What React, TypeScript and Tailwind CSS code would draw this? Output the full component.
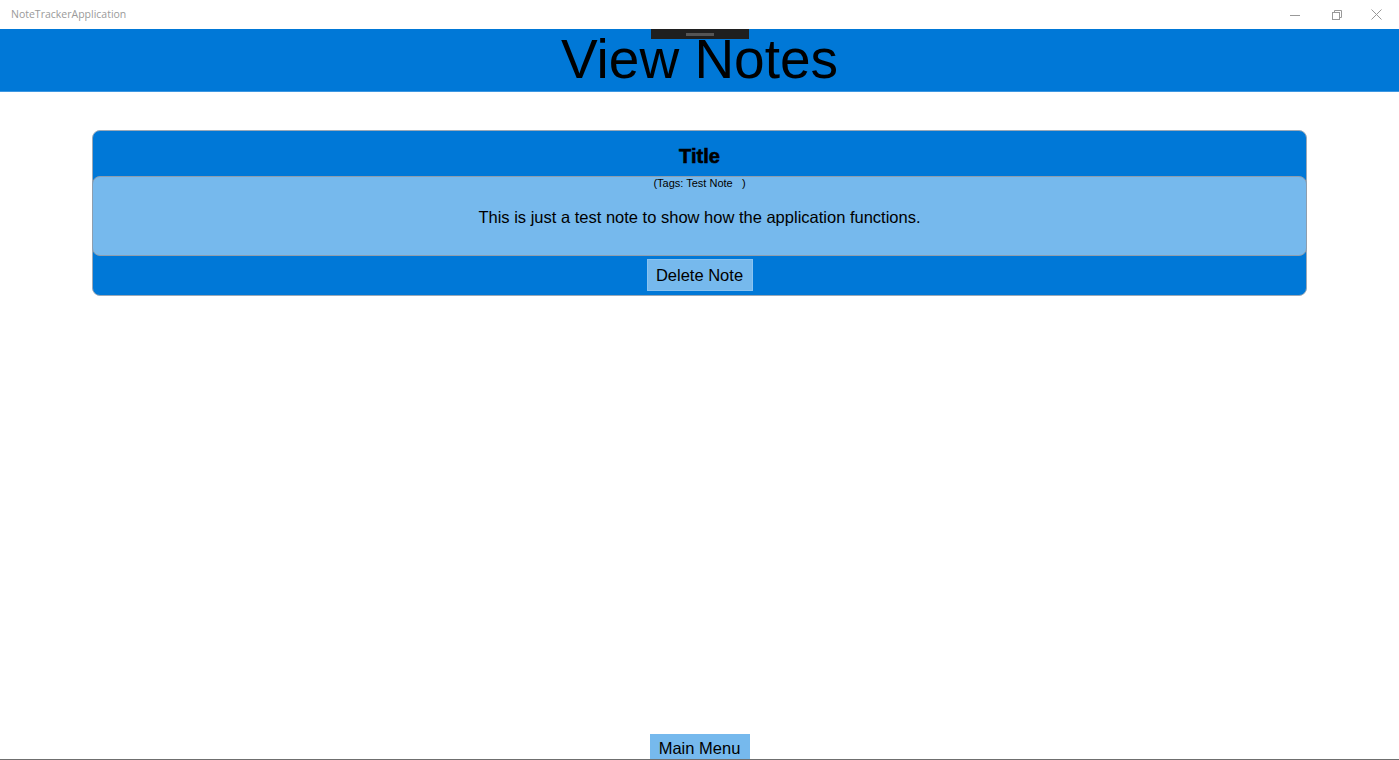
import React from 'react';

const arial = { fontFamily: '"Liberation Sans", Arial, sans-serif' };

function TitleBar() {
  return (
    <div className="flex h-[29px] items-center justify-between bg-white">
      <span className="pl-[11px] text-[10.5px] text-[#9a9a9a] [font-family:'Open_Sans',sans-serif]">
        NoteTrackerApplication
      </span>
      <div className="mr-[4px] flex h-full items-center">
        {/* minimize */}
        <div className="flex h-full w-[42px] items-center justify-center">
          <svg width="10" height="10" viewBox="0 0 10 10">
            <path d="M0 5.5h10" stroke="#999" strokeWidth="1" />
          </svg>
        </div>
        {/* restore */}
        <div className="flex h-full w-[41px] items-center justify-center">
          <svg width="10" height="10" viewBox="0 0 10 10" fill="none" stroke="#999" strokeWidth="1">
            <rect x="0.5" y="2.5" width="7" height="7" />
            <path d="M2.5 2.5V0.5h7v7h-2" />
          </svg>
        </div>
        {/* close */}
        <div className="flex h-full w-[38px] items-center justify-center">
          <svg width="11" height="11" viewBox="0 0 11 11" stroke="#999" strokeWidth="1">
            <path d="M0.5 0.5l10 10M10.5 0.5l-10 10" />
          </svg>
        </div>
      </div>
    </div>
  );
}

export default function App() {
  return (
    <div className="flex h-[760px] w-full flex-col overflow-hidden bg-white" style={arial}>
      <TitleBar />

      {/* 헤더 */}
      <div className="relative flex h-[63px] items-center justify-center border-b border-[#3d97e2] bg-[#0078d7]">
        <div className="absolute left-[651px] top-0 flex h-[10px] w-[98px] items-center justify-center bg-[#1f1f1f]">
          <div className="h-[3px] w-[28px] bg-[#555]" />
        </div>
        <h1 className="mt-[-2px] text-[55px] leading-none text-black">View Notes</h1>
      </div>

      {/* 노트 카드 */}
      <div className="flex-1 px-[92px] pt-[38px]">
        <div className="flex h-[166px] flex-col rounded-[8px] border border-[#9aa9b8] bg-[#0078d7]">
          <div className="flex h-[45px] items-end justify-center pb-[10px]">
            <span className="text-[20px] font-bold leading-none text-black [-webkit-text-stroke:0.6px_black]">
              Title
            </span>
          </div>
          <div className="mx-[-1px] flex h-[80px] flex-col items-center rounded-[8px] border border-[#8e9eae] bg-[#76b9ed]">
            <span className="text-[11px] leading-[13px] text-black">(Tags: Test Note&nbsp;&nbsp;&nbsp;)</span>
            <p className="mt-[19px] text-[16.5px] leading-none text-black">
              This is just a test note to show how the application functions.
            </p>
          </div>
          <div className="flex flex-1 items-center justify-center">
            <button className="mb-[1px] h-[32px] w-[106px] border border-[#8ac3f0] bg-[#76b9ed] text-[16.5px] text-black">
              Delete Note
            </button>
          </div>
        </div>
      </div>

      {/* 메인 메뉴 */}
      <div className="flex justify-center border-b border-[#6f6f6f]">
        <button className="h-[25px] w-[100px] bg-[#76b9ed] pt-[3px] text-[16.5px] leading-none text-black">
          Main Menu
        </button>
      </div>
    </div>
  );
}
